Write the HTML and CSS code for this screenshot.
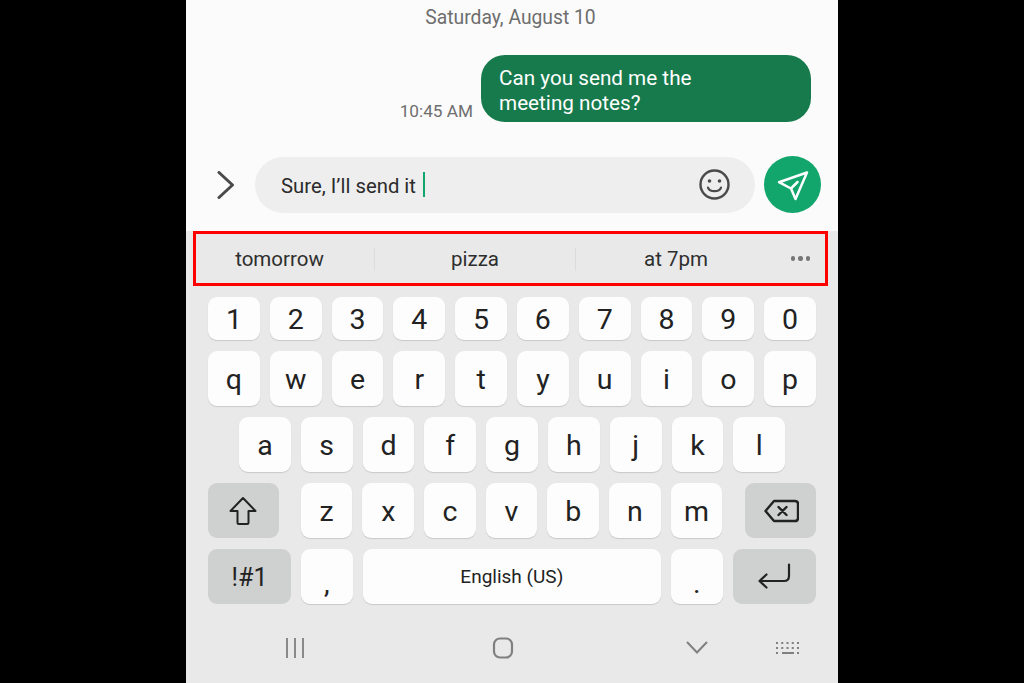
FILE: index.html
```html
<!DOCTYPE html>
<html>
<head>
    <title>Messages</title>
    <link rel="stylesheet" href="styles.css">
</head>
<body>
    <div class="phone">
        <div class="chat">
            <div class="date">Saturday, August 10</div>
            <div class="message">
                <span class="time">10:45 AM</span>
                <div class="bubble">Can you send me the<br>meeting notes?</div>
            </div>
            <div class="composer">
                <div class="expand">
                    <svg width="18" height="28" viewBox="0 0 18 28"><path d="M2 1.5 L15.5 14 L2 26.5" fill="none" stroke="#4a4a4a" stroke-width="3" stroke-linecap="round" stroke-linejoin="round"/></svg>
                </div>
                <div class="field">
                    <span class="typed">Sure, I’ll send it</span><span class="caret"></span>
                    <svg class="smiley" width="33" height="33" viewBox="0 0 33 33"><circle cx="16.5" cy="16.5" r="14" fill="none" stroke="#4a4a4a" stroke-width="2.4"/><circle cx="11.5" cy="13" r="1.8" fill="#4a4a4a"/><circle cx="21.5" cy="13" r="1.8" fill="#4a4a4a"/><path d="M10 19.6 C11.8 24.4 21.2 24.4 23 19.6" fill="none" stroke="#4a4a4a" stroke-width="2.2" stroke-linecap="round"/></svg>
                </div>
                <div class="send">
                    <svg width="32" height="32" viewBox="0 0 32 32"><path d="M30 3.5 L2 13.2 L14 19.5 L18.5 30 Z M14 19.5 L20.5 13" fill="none" stroke="#fff" stroke-width="2.5" stroke-linejoin="round" stroke-linecap="round"/></svg>
                </div>
            </div>
        </div>

        <div class="keyboard">
            <div class="suggestions">
                <div class="word first">tomorrow</div>
                <div class="word second">pizza</div>
                <div class="word third">at 7pm</div>
                <div class="more"><i></i><i></i><i></i></div>
            </div>

            <div class="keys">
                <div class="row short">
                    <button class="key digit">1</button><button class="key digit">2</button><button class="key digit">3</button><button class="key digit">4</button><button class="key digit">5</button><button class="key digit">6</button><button class="key digit">7</button><button class="key digit">8</button><button class="key digit">9</button><button class="key digit">0</button>
                </div>
                <div class="row">
                    <button class="key">q</button><button class="key">w</button><button class="key">e</button><button class="key">r</button><button class="key">t</button><button class="key">y</button><button class="key">u</button><button class="key">i</button><button class="key">o</button><button class="key">p</button>
                </div>
                <div class="row centered">
                    <button class="key">a</button><button class="key">s</button><button class="key">d</button><button class="key">f</button><button class="key">g</button><button class="key">h</button><button class="key">j</button><button class="key">k</button><button class="key">l</button>
                </div>
                <div class="row">
                    <button class="key dark shift">
                        <svg width="30" height="30" viewBox="0 0 30 30"><path d="M15 2 L27.5 15 L20.5 15 L20.5 26.5 Q20.5 28 19 28 L11 28 Q9.5 28 9.5 26.5 L9.5 15 L2.5 15 Z" fill="none" stroke="#222" stroke-width="2" stroke-linejoin="round"/></svg>
                    </button>
                    <button class="key letter-gap">z</button><button class="key">x</button><button class="key">c</button><button class="key">v</button><button class="key">b</button><button class="key">n</button><button class="key">m</button>
                    <button class="key dark back">
                        <svg width="36" height="24" viewBox="0 0 36 24"><path d="M11 2 L32 2 Q35 2 35 5 L35 19 Q35 22 32 22 L11 22 L2.5 12 Z" fill="none" stroke="#222" stroke-width="2.4" stroke-linejoin="round"/><path d="M15.5 8 L23.5 16 M23.5 8 L15.5 16" stroke="#222" stroke-width="2.4" stroke-linecap="round"/></svg>
                    </button>
                </div>
                <div class="row">
                    <button class="key dark symbols">!#1</button>
                    <button class="key punct">,</button>
                    <button class="key space">English (US)</button>
                    <button class="key punct">.</button>
                    <button class="key dark enter">
                        <svg width="34" height="28" viewBox="0 0 34 28"><path d="M32 1.5 L32 13 Q32 18 27 18 L3 18 M9.5 11.5 L2.5 18 L9.5 24.5" fill="none" stroke="#222" stroke-width="2.2" stroke-linecap="round" stroke-linejoin="round"/></svg>
                    </button>
                </div>
            </div>

            <div class="nav">
                <svg class="nav-recent" width="20" height="20" viewBox="0 0 20 20"><path d="M2 0 V20 M10 0 V20 M18 0 V20" stroke="#8a8a8a" stroke-width="2"/></svg>
                <svg class="nav-home" width="22" height="22" viewBox="0 0 22 22"><rect x="2" y="1.5" width="18" height="19" rx="6" fill="none" stroke="#808080" stroke-width="2.2"/></svg>
                <svg class="nav-back" width="22" height="13" viewBox="0 0 22 13"><path d="M1 1 L11 11.5 L21 1" fill="none" stroke="#808080" stroke-width="2"/></svg>
                <svg class="nav-kbd" width="25" height="14" viewBox="0 0 25 14"><path d="M1 2 H24 M1 7 H24" stroke="#808080" stroke-width="2" stroke-dasharray="2 3.25"/><path d="M1 12 H3 M7 12 H19 M22 12 H24" stroke="#808080" stroke-width="2"/></svg>
            </div>
        </div>
    </div>
</body>
</html>
```

FILE: styles.css
```css
body {
    margin: 0;
    background-color: #000;
    font-family: Roboto, "Liberation Sans", sans-serif;
    overflow: hidden;
}
svg {
    display: block;
}
.phone {
    width: 652px;
    height: 683px;
    margin: 0 auto;
    overflow: hidden;
    background-color: #e9e9e9;
}

/* chat */
.chat {
    height: 231px;
    background-color: #fbfbfb;
}
.date {
    height: 35px;
    line-height: 35px;
    text-align: center;
    font-size: 19.3px;
    color: #6e6e6e;
    padding-right: 3px;
}
.message {
    display: flex;
    justify-content: flex-end;
    align-items: flex-end;
    margin-top: 20px;
    padding-right: 27px;
}
.time {
    font-size: 17.2px;
    line-height: 20px;
    color: #6e6e6e;
    margin: 0 8px 1px 0;
}
.bubble {
    box-sizing: border-box;
    width: 330px;
    height: 67px;
    padding: 11px 18px;
    border-radius: 24px;
    background-color: #177a4c;
    color: #fff;
    font-size: 20.7px;
    line-height: 25px;
}
.composer {
    display: flex;
    align-items: center;
    height: 57px;
    margin-top: 34px;
}
.expand {
    display: flex;
    justify-content: center;
    box-sizing: border-box;
    width: 69px;
    padding-left: 11px;
}
.field {
    display: flex;
    align-items: center;
    box-sizing: border-box;
    width: 500px;
    height: 56px;
    padding: 0 24px 0 26px;
    border-radius: 28px;
    background-color: #eeeeee;
    font-size: 20.3px;
    color: #2b2b2b;
}
.typed {
    padding-top: 2px;
}
.caret {
    width: 2px;
    height: 25px;
    margin-left: 7px;
    background-color: #12a56c;
}
.smiley {
    margin-left: auto;
}
.send {
    display: flex;
    align-items: center;
    justify-content: center;
    width: 57px;
    height: 57px;
    margin-left: 9px;
    border-radius: 50%;
    background-color: #12a56c;
}

/* keyboard */
.keyboard {
    height: 452px;
}
.suggestions {
    display: flex;
    align-items: center;
    box-sizing: border-box;
    height: 55px;
    margin: 0 10px 0 7px;
    padding-top: 2px;
    border: 3px solid #f00;
    font-size: 20.5px;
    color: #2e2e2e;
}
.word {
    box-sizing: border-box;
    height: 23px;
    line-height: 23px;
    text-align: center;
}
.first {
    width: 179px;
    padding-right: 11px;
    border-right: 1px solid #dcdcdc;
}
.second {
    width: 201px;
    border-right: 1px solid #dcdcdc;
}
.third {
    width: 200px;
}
.more {
    display: flex;
    justify-content: center;
    gap: 3px;
    flex: 1;
    padding-bottom: 2px;
}
.more i {
    width: 4.5px;
    height: 4.5px;
    border-radius: 50%;
    background-color: #757575;
}
.keys {
    display: flex;
    flex-direction: column;
    gap: 11px;
    padding: 11px 22px 0;
}
.row {
    display: flex;
    gap: 10px;
    height: 55px;
}
.row.short {
    height: 43px;
}
.row.centered {
    padding-left: 31px;
}
.key {
    display: flex;
    align-items: center;
    justify-content: center;
    width: 51.8px;
    padding: 1px 0 0;
    border: 0;
    border-radius: 9px;
    background-color: #fdfdfd;
    box-shadow: 0 1px 1px #c9c9c9;
    font-family: inherit;
    font-size: 28.5px;
    color: #222;
}
.key.dark {
    background-color: #cfd0d0;
    box-shadow: none;
}
.key.shift {
    width: 71px;
}
.key.letter-gap {
    margin-left: 12px;
}
.key.back {
    width: 71px;
    margin-left: 13px;
}
.key.symbols {
    width: 83px;
    font-size: 25px;
}
.key.punct {
    padding-top: 14px;
}
.key.space {
    width: 298px;
    padding-top: 0;
    font-size: 19px;
}
.key.enter {
    width: 83px;
}
.nav {
    display: flex;
    align-items: center;
    height: 45px;
    margin-top: 21px;
}
.nav-recent {
    margin-left: 99px;
}
.nav-home {
    margin-left: 187px;
}
.nav-back {
    margin-left: 172px;
}
.nav-kbd {
    margin-left: 67px;
}
```
